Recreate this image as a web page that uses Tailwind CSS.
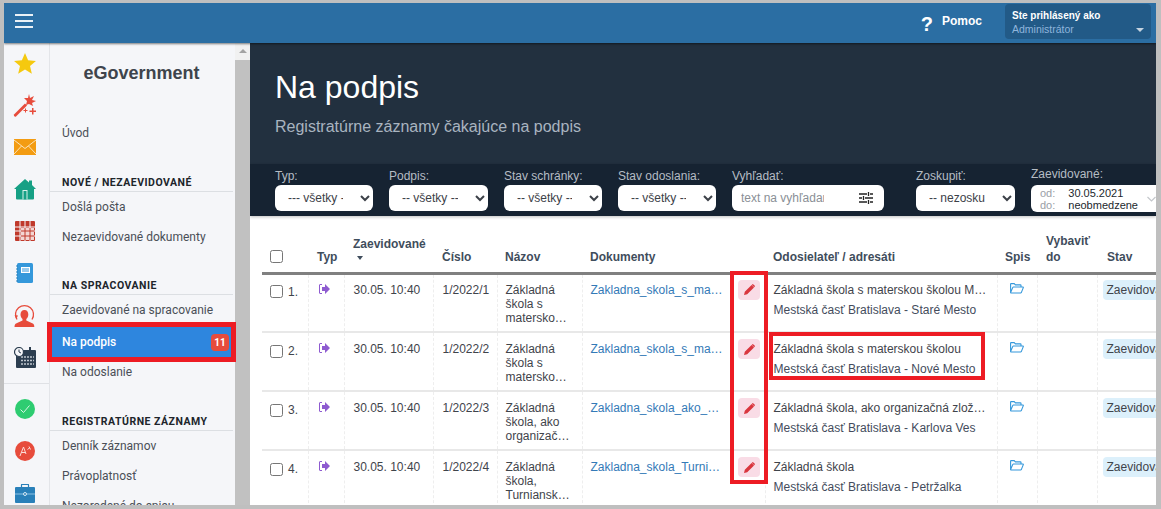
<!DOCTYPE html>
<html lang="sk">
<head>
    <meta charset="UTF-8">
    <meta name="viewport" content="width=device-width, initial-scale=1.0">
    <script src="https://cdn.jsdelivr.net/npm/@tailwindcss/browser@4"></script>
    <title>Na podpis</title>
</head>
<body class="bg-[#bfbfbf] font-['Liberation_Sans',sans-serif]">
<div class="relative w-[1161px] h-[509px] overflow-hidden pt-[3px] pl-[4px] pr-[5px] pb-[4px]">
    <div class="flex flex-col h-full overflow-hidden bg-white">

        <!--Top bar-->
        <header class="flex items-center h-[40px] shrink-0 bg-[#2b6ea3] shadow-[0_1px_2px_rgba(0,0,0,0.5)] z-10">
            <div class="flex flex-col gap-[4px] ml-[11px] -mt-[5px]">
                <span class="block w-[18px] h-[2px] bg-white/90"></span>
                <span class="block w-[18px] h-[2px] bg-white/90"></span>
                <span class="block w-[18px] h-[2px] bg-white/90"></span>
            </div>
            <div class="ml-auto flex items-center">
                <span class="text-white font-bold text-[20px] leading-none mr-[9px] mt-[1px]">?</span>
                <span class="text-white font-bold text-[12px] mr-[23px] -mt-[5px]">Pomoc</span>
                <div class="relative w-[146px] h-[35px] -mt-[4px] mr-[5px] bg-[#225a87] rounded-sm pl-[7px] pt-[5px]">
                    <p class="text-white font-bold text-[10px] leading-[13px]">Ste prihlásený ako</p>
                    <p class="text-[#8fb5dc] text-[10.5px] leading-[14px]">Administrátor</p>
                    <span class="absolute right-[7px] top-[24px] w-0 h-0 border-x-[4px] border-x-transparent border-t-[4px] border-t-[#c5d3e0]"></span>
                </div>
            </div>
        </header>

        <div class="flex flex-1 min-h-0">
            <!--Icon rail-->
            <nav class="w-[46px] shrink-0 bg-[#f5f6f9] border-r border-[#e3e5e9] flex flex-col overflow-hidden">
                <div class="h-[42px] shrink-0 -mt-[1px] pr-[4px] flex items-center justify-center">
                    <svg width="22" height="21" viewBox="0 0 24 23"><path fill="#f5c90f" d="M12 0l3.4 8 8.6.7-6.5 5.6 2 8.4L12 18.2 4.500 22.700l2-8.400L0 8.700 8.600 8z"/></svg>
                </div>
                <div class="h-[42px] shrink-0 pr-[4px] flex items-center justify-center">
                    <svg width="24" height="24" viewBox="0 0 24 24" fill="#e74c3c"><path d="M1 21.500L12 10.500l2 2L3 23.500q-1 .5-1.700-.2T1 21.500z"/><path d="M16 1l1 4 4-2-2 4 4 1-4 2 1 3-4-2-3 1 1-4-3-3 4 0z"/><path d="M19 15h1.500v2.500H23V19h-2.500v2.500H19V19h-2.500v-1.500H19zM12 15.500h1v1.500h1.500v1H13v1.500h-1V18h-1.500v-1H12z"/></svg>
                </div>
                <div class="h-[42px] shrink-0 pr-[4px] flex items-center justify-center">
                    <svg width="22" height="16" viewBox="0 0 22 16"><rect width="22" height="16" fill="#f39c12"/><path d="M0 1l11 8.500L22 1M0 15l7.500-8M22 15l-7.500-8" fill="none" stroke="#fbe3b8" stroke-width="1"/></svg>
                </div>
                <div class="h-[42px] shrink-0 pr-[4px] flex items-center justify-center">
                    <svg width="22" height="21" viewBox="0 0 22 21"><path fill="#16a085" d="M11 0l4 3.500V1.500h3v4.600L22 10h-2v9.500q0 1-1 1H3q-1 0-1-1V10H0z"/><rect x="8.500" y="11" width="5" height="9.500" fill="#d7f0ea"/><rect x="9.500" y="12" width="3" height="8.500" fill="#16a085"/></svg>
                </div>
                <div class="h-[42px] shrink-0 pr-[4px] flex items-center justify-center">
                    <svg width="20" height="20" viewBox="0 0 20 20"><rect width="20" height="20" rx="1" fill="#c0392b"/><path d="M0 6h20M0 10h20M0 15h20M5 0v20M10 0v20M15 0v20" stroke="#f5f6f9" stroke-width="1"/><rect x="6" y="7" width="13" height="12" fill="#f3d6d3"/><path d="M6 10h13M6 15h13M10 7v12M15 7v12" stroke="#c0392b" stroke-width="1"/></svg>
                </div>
                <div class="h-[42px] shrink-0 pr-[4px] flex items-center justify-center">
                    <svg width="17" height="20" viewBox="0 0 17 20"><rect x="1" width="16" height="20" rx="1.500" fill="#3498db"/><path d="M0 3h2M0 6h2M0 9h2M0 12h2M0 15h2M0 18h2" stroke="#2980b9" stroke-width="1"/><rect x="5" y="4" width="9" height="6" fill="#fff"/><path d="M6 6h7M6 8h7" stroke="#3498db" stroke-width="1"/></svg>
                </div>
                <div class="h-[42px] shrink-0 pr-[4px] flex items-center justify-center">
                    <svg width="21" height="23" viewBox="0 0 21 23" fill="#e74c3c"><path d="M10.500 6c2.500 0 3.800 2 3.800 4.500 0 2-1 3.500-2 4.500v1.500l6.500 3c1 .5 1.500 1.500 1.500 3.500H0.500c0-2 .5-3 1.500-3.500l6.500-3V15c-1-1-2-2.500-2-4.500C6.500 8 8 6 10.500 6z"/><path d="M3 15.500A9 9 0 1 1 18 15.500" fill="none" stroke="#e74c3c" stroke-width="1.300"/><path d="M0.500 11l3.500.5-1.500 3z"/></svg>
                </div>
                <div class="h-[42px] shrink-0 pr-[4px] flex items-center justify-center">
                    <svg width="22" height="21" viewBox="0 0 22 21"><rect x="2" y="3" width="20" height="18" rx="1" fill="#2c3e50"/><rect x="15" y="0" width="2" height="5" fill="#2c3e50"/><path d="M7 10h13M7 13.500h13M7 17h13" stroke="#bfc6cd" stroke-width="1.500" stroke-dasharray="2 1"/><circle cx="5" cy="5" r="4.500" fill="#f5f6f9" stroke="#2c3e50" stroke-width="1.200"/><path d="M5 2.500V5l2 1" fill="none" stroke="#2c3e50"/></svg>
                </div>
                <div class="h-[1px] shrink-0 bg-[#dfe1e5] mt-[5px] mb-[4px]"></div>
                <div class="h-[42px] shrink-0 pr-[4px] flex items-center justify-center">
                    <svg width="20" height="20" viewBox="0 0 20 20"><circle cx="10" cy="10" r="10" fill="#2ecc71"/><path d="M5.500 10.500l3 3 6-7" fill="none" stroke="#d9f7e5" stroke-width="1"/></svg>
                </div>
                <div class="h-[42px] shrink-0 pr-[4px] flex items-center justify-center">
                    <svg width="20" height="20" viewBox="0 0 20 20"><circle cx="10" cy="10" r="10" fill="#e74c3c"/><path d="M5 15l3.500-9 2.500 7M6.500 11.500h4.500M12.500 8.500l2.500-2M14 5.500l1.500 3" fill="none" stroke="#fbdcd8" stroke-width="1"/></svg>
                </div>
                <div class="h-[42px] shrink-0 pr-[4px] flex items-center justify-center">
                    <svg width="20" height="19" viewBox="0 0 20 19"><rect y="3" width="20" height="16" rx="1" fill="#2980b9"/><path d="M6.500 3V1q0-.7.7-.7h5.600q.7 0 .7.7v2" fill="none" stroke="#2980b9" stroke-width="1.200"/><path d="M0 10h20" stroke="#8cc1e4" stroke-width="1"/><circle cx="10" cy="10" r="1.500" fill="#2980b9" stroke="#d6e8f4"/></svg>
                </div>
            </nav>

            <!--Sidebar-->
            <aside class="w-[200px] shrink-0 bg-[#f5f6f9] flex overflow-hidden font-['Roboto',sans-serif] text-[#4a4f57] text-[12px]">
                <div class="w-[185px] shrink-0 overflow-hidden">
                    <h1 class="text-center font-['Liberation_Sans',sans-serif] font-bold text-[18px] leading-[20px] text-[#3e444c] mt-[20px] pr-[2px]">eGovernment</h1>
                    <a class="flex items-center h-[30px] pl-[12px] mt-[35px]">Úvod</a>
                    <div class="mt-[28px] mr-[2px] h-[16px] pl-[12px] border-b border-[#dcdfe3] font-bold text-[10.5px] leading-[13px] tracking-[0.5px] text-[#20252b]">NOVÉ / NEZAEVIDOVANÉ</div>
                    <a class="flex items-center h-[30px] pl-[12px]">Došlá pošta</a>
                    <a class="flex items-center h-[30px] pl-[12px]">Nezaevidované dokumenty</a>
                    <div class="mt-[27px] mr-[2px] h-[16px] pl-[12px] border-b border-[#dcdfe3] font-bold text-[10.5px] leading-[13px] tracking-[0.5px] text-[#20252b]">NA SPRACOVANIE</div>
                    <a class="flex items-center h-[30px] pl-[12px]">Zaevidované na spracovanie</a>
                    <a class="flex items-center justify-between h-[30px] pl-[12px] pr-[5px] mr-[1px] mt-[2px] bg-[#2e86de] text-white font-medium">Na podpis<span class="flex items-center justify-center w-[18px] h-[17px] rounded-sm bg-[#e74c3c] text-[10px] font-bold">11</span></a>
                    <a class="flex items-center h-[30px] pl-[12px]">Na odoslanie</a>
                    <div class="mt-[28px] mr-[2px] h-[16px] pl-[12px] border-b border-[#dcdfe3] font-bold text-[10.5px] leading-[13px] tracking-[0.5px] text-[#20252b]">REGISTRATÚRNE ZÁZNAMY</div>
                    <a class="flex items-center h-[30px] pl-[12px]">Denník záznamov</a>
                    <a class="flex items-center h-[30px] pl-[12px]">Právoplatnosť</a>
                    <a class="flex items-center h-[30px] pl-[12px]">Nezoradené do spisu</a>
                </div>
                <div class="w-[15px] shrink-0 flex flex-col bg-[#f1f1f1]">
                    <div class="h-[17px] shrink-0 flex justify-center pt-[6px]"><span class="w-0 h-0 border-x-[4px] border-x-transparent border-b-[4px] border-b-[#a3a3a3]"></span></div>
                    <div class="flex-1 bg-[#c1c1c1]"></div>
                </div>
            </aside>

            <!--Main-->
            <main class="flex-1 min-w-0 flex flex-col overflow-hidden">
                <section class="h-[121px] shrink-0 bg-[#22303f] pl-[25px] pt-[25px]">
                    <h2 class="text-white text-[32px] leading-[38px]">Na podpis</h2>
                    <p class="text-[#a9b4c0] text-[16px] leading-[18px] mt-[12px]">Registratúrne záznamy čakajúce na podpis</p>
                </section>

                <section class="h-[52px] shrink-0 bg-[#162332] shadow-[0_1px_3px_rgba(0,0,0,0.25)] pl-[25px] flex items-start text-[12px] text-[#b5bcc4]">
                    <label class="w-[98px] shrink-0 mt-[5px] block"><span class="block leading-[14px] mb-[2px]">Typ:</span>
                        <select class="w-full h-[26px] rounded-md bg-white text-[#3c4148] pl-[9px] pr-[14px]"><option>--- všetky ---</option></select></label>
                    <label class="w-[99px] shrink-0 ml-[16px] mt-[5px] block"><span class="block leading-[14px] mb-[2px]">Podpis:</span>
                        <select class="w-full h-[26px] rounded-md bg-white text-[#3c4148] pl-[9px] pr-[14px]"><option>-- všetky --</option></select></label>
                    <label class="w-[98px] shrink-0 ml-[16px] mt-[5px] block"><span class="block leading-[14px] mb-[2px]">Stav schránky:</span>
                        <select class="w-full h-[26px] rounded-md bg-white text-[#3c4148] pl-[9px] pr-[14px]"><option>-- všetky --</option></select></label>
                    <label class="w-[98px] shrink-0 ml-[16px] mt-[5px] block"><span class="block leading-[14px] mb-[2px]">Stav odoslania:</span>
                        <select class="w-full h-[26px] rounded-md bg-white text-[#3c4148] pl-[9px] pr-[14px]"><option>-- všetky --</option></select></label>
                    <label class="w-[152px] shrink-0 ml-[16px] mt-[5px] block"><span class="block leading-[14px] mb-[2px]">Vyhľadať:</span>
                        <span class="flex items-center h-[26px] rounded-md bg-white pl-[9px]">
                            <input class="w-[83px] text-[12px] outline-none placeholder:text-[#8a8f96]" placeholder="text na vyhľadanie">
                            <svg class="ml-[35px]" width="14" height="12" viewBox="0 0 14 12" fill="none" stroke="#222" stroke-width="1.300"><path d="M0 2h8M11 2h3M0 6h3M6 6h8M0 10h8M11 10h3M9.500 0v4M4.500 4v4M9.500 8v4"/></svg>
                        </span></label>
                    <label class="w-[99px] shrink-0 ml-[32px] mt-[5px] block"><span class="block leading-[14px] mb-[2px]">Zoskupiť:</span>
                        <select class="w-full h-[26px] rounded-md bg-white text-[#3c4148] pl-[9px] pr-[14px]"><option>-- nezoskupovať --</option></select></label>
                    <div class="w-[125px] ml-[16px] mt-[3px] shrink-0"><span class="block leading-[14px] mb-[4px]">Zaevidované:</span>
                        <div class="flex items-center h-[27px] rounded-l-md bg-white pl-[9px] text-[11px] leading-[12px]">
                            <div class="text-[#9aa0a6] w-[30px]"><p>od:</p><p>do:</p></div>
                            <div class="text-[#22272d]"><p>30.05.2021</p><p>neobmedzene</p></div>
                            <svg class="ml-[9px] shrink-0" width="9" height="6" viewBox="0 0 9 6" fill="none" stroke="#c4c7cb" stroke-width="1.200"><path d="M.5 1l4 4 4-4"/></svg>
                        </div>
                    </div>
                </section>

                <div class="flex-1 min-h-0 overflow-hidden pl-[12px] pt-[3px]">
                    <table class="table-fixed border-collapse w-[894px] text-[12px] text-[#3f444b]">
                        <colgroup>
                            <col class="w-[46px]"><col class="w-[36px]"><col class="w-[89px]"><col class="w-[64px]"><col class="w-[85px]"><col class="w-[151px]"><col class="w-[32px]"><col class="w-[232px]"><col class="w-[40px]"><col class="w-[60px]"><col class="w-[59px]">
                        </colgroup>
                        <thead>
                            <tr class="h-[54px] border-b-[3px] border-[#808080] text-left align-bottom font-bold text-[#3f4d5c] leading-[16px]">
                                <th class="font-bold pl-[8px] pb-[9px]"><input type="checkbox" class="block"></th>
                                <th class="font-bold pl-[9px] pb-[7px]">Typ</th>
                                <th class="font-bold pl-[9px] pb-[7px]">Zaevidované<span class="block w-0 h-0 mt-[4px] mb-[5px] ml-[4px] border-x-[3px] border-x-transparent border-t-[4px] border-t-[#3f4d5c]"></span></th>
                                <th class="font-bold pl-[9px] pb-[7px]">Číslo</th>
                                <th class="font-bold pl-[8px] pb-[7px]">Názov</th>
                                <th colspan="2" class="font-bold pl-[8px] pb-[7px]">Dokumenty</th>
                                <th class="font-bold pl-[8px] pb-[7px]">Odosielateľ / adresáti</th>
                                <th class="font-bold pl-[8px] pb-[7px]">Spis</th>
                                <th class="font-bold pl-[9px] pb-[7px]">Vybaviť do</th>
                                <th class="font-bold pl-[10px] pb-[7px]">Stav</th>
                            </tr>
                        </thead>
                        <tbody>
                            <tr class="h-[59px] border-b-2 border-[#e8e8e8] align-top">
                                <td class="pl-[8px] pt-[8px] border-r border-dashed border-[#eeeeee]"><span class="flex items-center gap-[5px]"><input type="checkbox">1.</span></td>
                                <td class="pl-[10px] pt-[8px] border-r border-dashed border-[#eeeeee]"><svg width="11" height="10" viewBox="0 0 11 10" fill="#8e5bd0" class="mt-[1px]"><path d="M6 0l5 5-5 5V7H3V3h3z"/><path d="M3 .5H1Q.5.5.5 1v8q0 .5.5.5h2" fill="none" stroke="#8e5bd0"/></svg></td>
                                <td class="pl-[9px] pt-[8px] leading-[14px] border-r border-dashed border-[#eeeeee]">30.05. 10:40</td>
                                <td class="pl-[9px] pt-[8px] leading-[14px] border-r border-dashed border-[#eeeeee]">1/2022/1</td>
                                <td class="pl-[8px] pr-[8px] pt-[8px] leading-[14px] border-r border-dashed border-[#eeeeee]">Základná škola s matersko…</td>
                                <td class="pl-[8px] pt-[8px] leading-[14px] whitespace-nowrap"><a class="text-[#337ab7]">Zakladna_skola_s_ma…</a></td>
                                <td class="pl-[5px] pt-[5px] border-r border-dashed border-[#eeeeee]"><span class="flex items-center justify-center w-[22px] h-[20px] rounded-sm bg-[#f9dce6]"><svg width="11" height="11" viewBox="0 0 11 11" fill="#d9363e"><path d="M0 11l.8-3.200L7.600 1l2.400 2.400-6.800 6.800zM8.200.4q.6-.6 1.200 0l1.200 1.200q.6.6 0 1.200l-.4.4L7.800.8z"/></svg></span></td>
                                <td class="pl-[8px] pt-[5px] leading-[20px] border-r border-dashed border-[#eeeeee] whitespace-nowrap"><p>Základná škola s materskou školou M…</p><p class="text-[#444c5c]">Mestská časť Bratislava - Staré Mesto</p></td>
                                <td class="pl-[12px] pt-[8px] border-r border-dashed border-[#eeeeee]"><svg width="14" height="11" viewBox="0 0 14 11" fill="none" stroke="#3498db" stroke-width="1.100"><path d="M.6 9.500V1.200q0-.6.6-.6h3l1.200 1.300h5q.6 0 .6.6V4M.6 9.500L2.800 4.400q.2-.4.6-.4h9.400q.7 0 .5.6l-2 5q-.2.4-.6.4H1.200q-.6 0-.6-.5z"/></svg></td>
                                <td class="border-r border-dashed border-[#eeeeee]"></td>
                                <td class="pl-[5px] pt-[5px] whitespace-nowrap overflow-hidden"><span class="block h-[20px] leading-[20px] pl-[4px] rounded-l-sm bg-[#dcf0fb]">Zaevidované</span></td>
                            </tr>
                            <tr class="h-[59px] border-b-2 border-[#e8e8e8] align-top">
                                <td class="pl-[8px] pt-[9px] border-r border-dashed border-[#eeeeee]"><span class="flex items-center gap-[5px]"><input type="checkbox">2.</span></td>
                                <td class="pl-[10px] pt-[9px] border-r border-dashed border-[#eeeeee]"><svg width="11" height="10" viewBox="0 0 11 10" fill="#8e5bd0" class="mt-[1px]"><path d="M6 0l5 5-5 5V7H3V3h3z"/><path d="M3 .5H1Q.5.5.5 1v8q0 .5.5.5h2" fill="none" stroke="#8e5bd0"/></svg></td>
                                <td class="pl-[9px] pt-[9px] leading-[14px] border-r border-dashed border-[#eeeeee]">30.05. 10:40</td>
                                <td class="pl-[9px] pt-[9px] leading-[14px] border-r border-dashed border-[#eeeeee]">1/2022/2</td>
                                <td class="pl-[8px] pr-[8px] pt-[9px] leading-[14px] border-r border-dashed border-[#eeeeee]">Základná škola s matersko…</td>
                                <td class="pl-[8px] pt-[9px] leading-[14px] whitespace-nowrap"><a class="text-[#337ab7]">Zakladna_skola_s_ma…</a></td>
                                <td class="pl-[5px] pt-[6px] border-r border-dashed border-[#eeeeee]"><span class="flex items-center justify-center w-[22px] h-[20px] rounded-sm bg-[#f9dce6]"><svg width="11" height="11" viewBox="0 0 11 11" fill="#d9363e"><path d="M0 11l.8-3.200L7.600 1l2.400 2.400-6.800 6.800zM8.200.4q.6-.6 1.200 0l1.200 1.200q.6.6 0 1.200l-.4.4L7.800.8z"/></svg></span></td>
                                <td class="pl-[8px] pt-[6px] leading-[20px] border-r border-dashed border-[#eeeeee] whitespace-nowrap"><p>Základná škola s materskou školou</p><p class="text-[#444c5c]">Mestská časť Bratislava - Nové Mesto</p></td>
                                <td class="pl-[12px] pt-[9px] border-r border-dashed border-[#eeeeee]"><svg width="14" height="11" viewBox="0 0 14 11" fill="none" stroke="#3498db" stroke-width="1.100"><path d="M.6 9.500V1.200q0-.6.6-.6h3l1.200 1.300h5q.6 0 .6.6V4M.6 9.500L2.800 4.400q.2-.4.6-.4h9.400q.7 0 .5.6l-2 5q-.2.4-.6.4H1.200q-.6 0-.6-.5z"/></svg></td>
                                <td class="border-r border-dashed border-[#eeeeee]"></td>
                                <td class="pl-[5px] pt-[6px] whitespace-nowrap overflow-hidden"><span class="block h-[20px] leading-[20px] pl-[4px] rounded-l-sm bg-[#dcf0fb]">Zaevidované</span></td>
                            </tr>
                            <tr class="h-[59px] border-b-2 border-[#e8e8e8] align-top">
                                <td class="pl-[8px] pt-[9px] border-r border-dashed border-[#eeeeee]"><span class="flex items-center gap-[5px]"><input type="checkbox">3.</span></td>
                                <td class="pl-[10px] pt-[9px] border-r border-dashed border-[#eeeeee]"><svg width="11" height="10" viewBox="0 0 11 10" fill="#8e5bd0" class="mt-[1px]"><path d="M6 0l5 5-5 5V7H3V3h3z"/><path d="M3 .5H1Q.5.5.5 1v8q0 .5.5.5h2" fill="none" stroke="#8e5bd0"/></svg></td>
                                <td class="pl-[9px] pt-[9px] leading-[14px] border-r border-dashed border-[#eeeeee]">30.05. 10:40</td>
                                <td class="pl-[9px] pt-[9px] leading-[14px] border-r border-dashed border-[#eeeeee]">1/2022/3</td>
                                <td class="pl-[8px] pr-[8px] pt-[9px] leading-[14px] border-r border-dashed border-[#eeeeee]">Základná škola, ako organizač…</td>
                                <td class="pl-[8px] pt-[9px] leading-[14px] whitespace-nowrap"><a class="text-[#337ab7]">Zakladna_skola_ako_…</a></td>
                                <td class="pl-[5px] pt-[6px] border-r border-dashed border-[#eeeeee]"><span class="flex items-center justify-center w-[22px] h-[20px] rounded-sm bg-[#f9dce6]"><svg width="11" height="11" viewBox="0 0 11 11" fill="#d9363e"><path d="M0 11l.8-3.200L7.600 1l2.400 2.400-6.800 6.800zM8.200.4q.6-.6 1.200 0l1.200 1.200q.6.6 0 1.200l-.4.4L7.800.8z"/></svg></span></td>
                                <td class="pl-[8px] pt-[6px] leading-[20px] border-r border-dashed border-[#eeeeee] whitespace-nowrap"><p>Základná škola, ako organizačná zlož…</p><p class="text-[#444c5c]">Mestská časť Bratislava - Karlova Ves</p></td>
                                <td class="pl-[12px] pt-[9px] border-r border-dashed border-[#eeeeee]"><svg width="14" height="11" viewBox="0 0 14 11" fill="none" stroke="#3498db" stroke-width="1.100"><path d="M.6 9.500V1.200q0-.6.6-.6h3l1.200 1.300h5q.6 0 .6.6V4M.6 9.500L2.800 4.400q.2-.4.6-.4h9.400q.7 0 .5.6l-2 5q-.2.4-.6.4H1.200q-.6 0-.6-.5z"/></svg></td>
                                <td class="border-r border-dashed border-[#eeeeee]"></td>
                                <td class="pl-[5px] pt-[6px] whitespace-nowrap overflow-hidden"><span class="block h-[20px] leading-[20px] pl-[4px] rounded-l-sm bg-[#dcf0fb]">Zaevidované</span></td>
                            </tr>
                            <tr class="h-[59px] border-b-2 border-[#e8e8e8] align-top">
                                <td class="pl-[8px] pt-[9px] border-r border-dashed border-[#eeeeee]"><span class="flex items-center gap-[5px]"><input type="checkbox">4.</span></td>
                                <td class="pl-[10px] pt-[9px] border-r border-dashed border-[#eeeeee]"><svg width="11" height="10" viewBox="0 0 11 10" fill="#8e5bd0" class="mt-[1px]"><path d="M6 0l5 5-5 5V7H3V3h3z"/><path d="M3 .5H1Q.5.5.5 1v8q0 .5.5.5h2" fill="none" stroke="#8e5bd0"/></svg></td>
                                <td class="pl-[9px] pt-[9px] leading-[14px] border-r border-dashed border-[#eeeeee]">30.05. 10:40</td>
                                <td class="pl-[9px] pt-[9px] leading-[14px] border-r border-dashed border-[#eeeeee]">1/2022/4</td>
                                <td class="pl-[8px] pr-[8px] pt-[9px] leading-[14px] border-r border-dashed border-[#eeeeee]">Základná škola, Turniansk…</td>
                                <td class="pl-[8px] pt-[9px] leading-[14px] whitespace-nowrap"><a class="text-[#337ab7]">Zakladna_skola_Turni…</a></td>
                                <td class="pl-[5px] pt-[6px] border-r border-dashed border-[#eeeeee]"><span class="flex items-center justify-center w-[22px] h-[20px] rounded-sm bg-[#f9dce6]"><svg width="11" height="11" viewBox="0 0 11 11" fill="#d9363e"><path d="M0 11l.8-3.200L7.600 1l2.400 2.400-6.800 6.800zM8.200.4q.6-.6 1.200 0l1.200 1.200q.6.6 0 1.200l-.4.4L7.800.8z"/></svg></span></td>
                                <td class="pl-[8px] pt-[6px] leading-[20px] border-r border-dashed border-[#eeeeee] whitespace-nowrap"><p>Základná škola</p><p class="text-[#444c5c]">Mestská časť Bratislava - Petržalka</p></td>
                                <td class="pl-[12px] pt-[9px] border-r border-dashed border-[#eeeeee]"><svg width="14" height="11" viewBox="0 0 14 11" fill="none" stroke="#3498db" stroke-width="1.100"><path d="M.6 9.500V1.200q0-.6.6-.6h3l1.200 1.300h5q.6 0 .6.6V4M.6 9.500L2.800 4.400q.2-.4.6-.4h9.400q.7 0 .5.6l-2 5q-.2.4-.6.4H1.200q-.6 0-.6-.5z"/></svg></td>
                                <td class="border-r border-dashed border-[#eeeeee]"></td>
                                <td class="pl-[5px] pt-[6px] whitespace-nowrap overflow-hidden"><span class="block h-[20px] leading-[20px] pl-[4px] rounded-l-sm bg-[#dcf0fb]">Zaevidované</span></td>
                            </tr>
                        </tbody>
                    </table>
                </div>
            </main>
        </div>
    </div>

    <!--Red annotation frames drawn over the screenshot-->
    <div class="absolute left-[47px] top-[322px] w-[189px] h-[40px] border-[5px] border-[#ed1c24]"></div>
    <div class="absolute left-[730px] top-[271px] w-[38px] h-[213px] border-[4px] border-[#ed1c24]"></div>
    <div class="absolute left-[769px] top-[332px] w-[216px] h-[48px] border-[4px] border-[#ed1c24]"></div>
</div>
</body>
</html>
